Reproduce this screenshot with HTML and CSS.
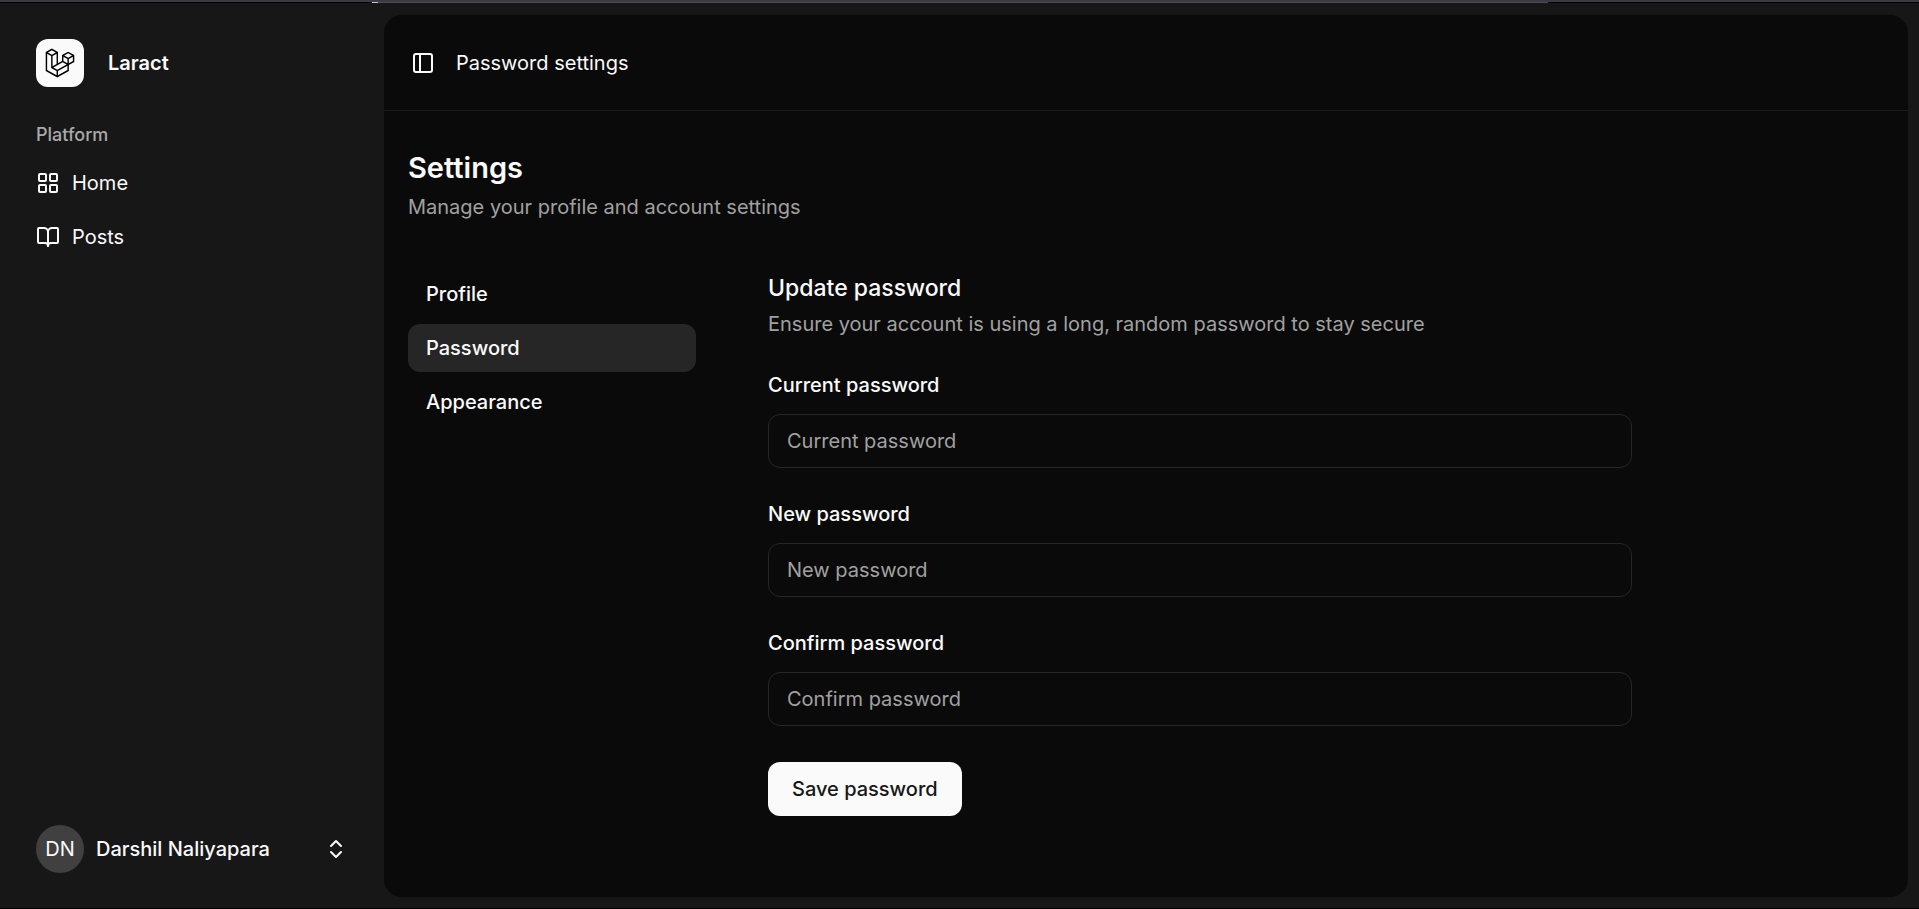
FILE: index.html
```html
<!DOCTYPE html>
<html lang="en">
<head>
<meta charset="utf-8">
<title>Password settings - Laract</title>
<link rel="stylesheet" href="styles.css">
</head>
<body>
<div class="window-edge"><span class="window-edge-mark"></span><span class="window-edge-tab"></span></div>
<div class="app">
  <aside class="sidebar">
    <a class="brand" href="#">
      <span class="brand-mark">
        <svg viewBox="0 0 40 42" width="30" height="30" aria-hidden="true"><path fill="currentColor" fill-rule="evenodd" clip-rule="evenodd" d="M17.2 5.633 8.6.855 0 5.633v26.51l16.2 9 16.2-9v-8.442l7.6-4.223V9.856l-8.6-4.777-8.6 4.777V18.3l-5.6 3.111V5.633ZM38 18.301l-5.6 3.11v-6.157l5.6-3.11V18.3Zm-1.06-7.856-5.54 3.078-5.54-3.079 5.54-3.078 5.54 3.079ZM24.8 18.3v-6.157l5.6 3.111v6.158L24.8 18.3Zm-1 1.732 5.54 3.078-13.14 7.302-5.54-3.078 13.14-7.3v-.002Zm-16.2 7.89 7.6 4.222V38.3L2 30.966V7.92l5.6 3.111v16.892ZM8.6 9.3 3.06 6.222 8.6 3.143l5.54 3.08L8.6 9.3Zm21.8 15.51-13.2 7.334V38.3l13.2-7.334v-6.156ZM9.6 11.034l5.6-3.11v14.6l-5.6 3.11v-14.6Z"/></svg>
      </span>
      <span class="brand-name">Laract</span>
    </a>
    <nav class="menu" aria-label="Platform">
      <div class="menu-title">Platform</div>
      <div class="menu-list">
        <a class="menu-item" href="#">
          <svg class="icon" viewBox="0 0 24 24" aria-hidden="true"><rect width="7" height="7" x="3" y="3" rx="1"/><rect width="7" height="7" x="14" y="3" rx="1"/><rect width="7" height="7" x="14" y="14" rx="1"/><rect width="7" height="7" x="3" y="14" rx="1"/></svg>
          <span>Home</span>
        </a>
        <a class="menu-item" href="#">
          <svg class="icon" viewBox="0 0 24 24" aria-hidden="true"><path d="M12 7v14"/><path d="M3 18a1 1 0 0 1-1-1V4a1 1 0 0 1 1-1h5a4 4 0 0 1 4 4 4 4 0 0 1 4-4h5a1 1 0 0 1 1 1v13a1 1 0 0 1-1 1h-6a3 3 0 0 0-3 3 3 3 0 0 0-3-3z"/></svg>
          <span>Posts</span>
        </a>
      </div>
    </nav>
    <button class="user" type="button">
      <span class="avatar">DN</span>
      <span class="user-name">Darshil Naliyapara</span>
      <svg class="icon" viewBox="0 0 24 24" aria-hidden="true"><path d="m7 15 5 5 5-5"/><path d="m7 9 5-5 5 5"/></svg>
    </button>
  </aside>
  <main class="panel">
    <header class="topbar">
      <button class="toggle" type="button" aria-label="Toggle sidebar">
        <svg class="icon" viewBox="0 0 24 24" aria-hidden="true"><rect width="18" height="18" x="3" y="3" rx="2"/><path d="M9 3v18"/></svg>
      </button>
      <span>Password settings</span>
    </header>
    <div class="content">
      <div class="page-head">
        <h1>Settings</h1>
        <p>Manage your profile and account settings</p>
      </div>
      <div class="columns">
        <nav class="tabs" aria-label="Settings">
          <a class="tab" href="#">Profile</a>
          <a class="tab tab-active" href="#" aria-current="page">Password</a>
          <a class="tab" href="#">Appearance</a>
        </nav>
        <section class="section">
          <div class="section-head">
            <h2>Update password</h2>
            <p>Ensure your account is using a long, random password to stay secure</p>
          </div>
          <form class="form">
            <div class="field">
              <label for="current">Current password</label>
              <input id="current" type="password" placeholder="Current password">
            </div>
            <div class="field">
              <label for="new">New password</label>
              <input id="new" type="password" placeholder="New password">
            </div>
            <div class="field">
              <label for="confirm">Confirm password</label>
              <input id="confirm" type="password" placeholder="Confirm password">
            </div>
            <button class="save" type="button">Save password</button>
          </form>
        </section>
      </div>
    </div>
  </main>
</div>
</body>
</html>
```
FILE: styles.css
```css
* { box-sizing: border-box; }

body {
  margin: 0;
  min-height: 100vh;
  display: flex;
  flex-direction: column;
  background: #171717;
  border-bottom: 1px solid #000;
  color: #fafafa;
  font-family: Inter, "Liberation Sans", sans-serif;
  font-size: 20px;
  line-height: 30px;
}

h1, h2, p { margin: 0; }
a { color: inherit; text-decoration: none; }
button, input { font: inherit; color: inherit; }

.icon {
  flex: none;
  width: 24px;
  height: 24px;
  fill: none;
  stroke: currentColor;
  stroke-width: 2;
  stroke-linecap: round;
  stroke-linejoin: round;
}

.window-edge {
  display: flex;
  height: 3px;
  padding: 2px 371px 0 372px;
  background: linear-gradient(#3b3b42 2px, #000 2px);
}
.window-edge-mark { width: 6px; background: #c0bdf5; }
.window-edge-tab { flex: 1; background: #4c4c52; }

.app { flex: 1; display: flex; }

.sidebar {
  width: 384px;
  flex: none;
  display: flex;
  flex-direction: column;
  padding: 24px 12px;
}
.brand {
  display: flex;
  align-items: center;
  gap: 24px;
  padding: 12px 24px;
}
.brand-mark {
  display: grid;
  place-items: center;
  width: 48px;
  height: 48px;
  border-radius: 12px;
  background: #fafafa;
  color: #000;
}
.brand-name { font-weight: 600; }
.menu { padding: 0 12px; }
.menu-title { padding: 9px 12px; font-size: 18px; font-weight: 500; color: #aaa; }
.menu-list { display: flex; flex-direction: column; gap: 6px; }
.menu-item { display: flex; align-items: center; gap: 12px; padding: 9px 12px; }
.user {
  display: flex;
  align-items: center;
  gap: 12px;
  margin-top: auto;
  padding: 12px 24px 11px;
  border: 0;
  background: none;
  text-align: left;
}
.user-name { flex: 1; font-weight: 500; }
.avatar {
  display: grid;
  place-items: center;
  width: 48px;
  height: 48px;
  border-radius: 50%;
  background: #404040;
}

.panel {
  flex: 1;
  margin: 12px 11px 11px 0;
  border-radius: 18px;
  background: #0a0a0a;
}
.topbar {
  display: flex;
  align-items: center;
  gap: 21px;
  height: 96px;
  padding: 0 27px;
  border-bottom: 1px solid #1c1c1c;
}
.toggle { display: flex; padding: 0; border: 0; background: none; }
.content { padding: 36px 24px; }
.page-head, .section-head { display: flex; flex-direction: column; gap: 3px; }
.page-head { margin-bottom: 48px; }
.page-head h1 { font-size: 29px; line-height: 42px; font-weight: 600; }
p { color: #a1a1a1; }

.columns { display: flex; gap: 72px; }
.tabs { display: flex; flex-direction: column; gap: 6px; width: 288px; flex: none; }
.tab { padding: 9px 18px; border-radius: 12px; font-weight: 500; }
.tab-active { background: #262626; }
.section { flex: 1; max-width: 864px; }
.section-head { margin-bottom: 36px; }
.section-head h2 { font-size: 23px; line-height: 36px; font-weight: 500; }

.form { display: flex; flex-direction: column; align-items: flex-start; gap: 36px; }
.field { display: flex; flex-direction: column; gap: 18px; width: 100%; }
.field label { line-height: 21px; font-weight: 500; }
.field input {
  height: 54px;
  padding: 0 18px;
  border: 1px solid #262626;
  border-radius: 12px;
  background: transparent;
}
.field input::placeholder { color: #a1a1a1; opacity: 1; }
.save {
  height: 54px;
  padding: 0 24px;
  border: 0;
  border-radius: 12px;
  background: #fafafa;
  color: #171717;
  font-weight: 500;
}

.brand { margin-bottom: 12px; }
```
